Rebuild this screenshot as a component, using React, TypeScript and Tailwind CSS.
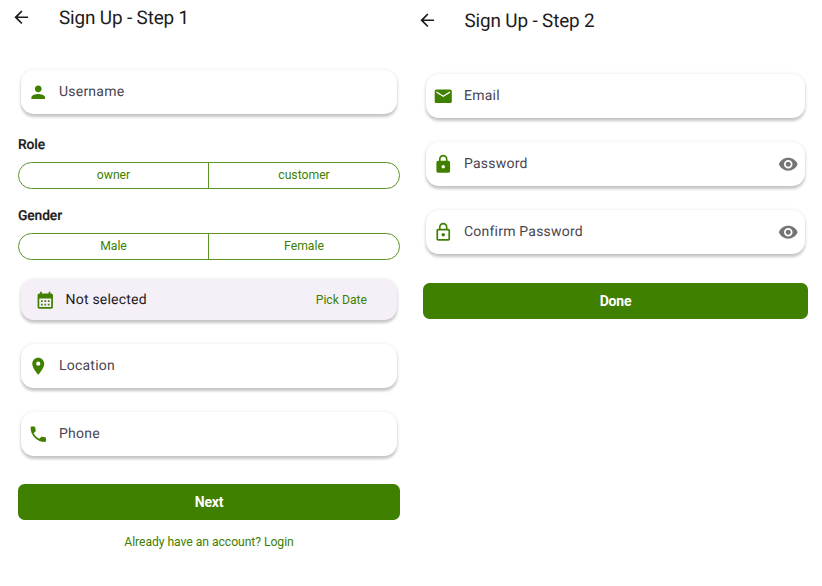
import type { ReactNode } from "react";
import {
  MdArrowBack,
  MdCalendarMonth,
  MdEmail,
  MdLocationOn,
  MdLock,
  MdLockOutline,
  MdPerson,
  MdPhone,
  MdVisibility,
} from "react-icons/md";

const raised =
  "rounded-[13px] shadow-[0_2.5px_3px_rgba(0,0,0,0.2),0_0.5px_4px_rgba(0,0,0,0.07)]";

function Header({ title, className }: { title: string; className: string }) {
  return (
    <header className={`flex items-center ${className}`}>
      <MdArrowBack className="size-[20.5px] shrink-0 text-[#1d1b20]" />
      <h1 className="ml-[27.5px] text-[18.9px] leading-[24px] tracking-[-0.14px] text-[#1d1b20]">
        {title}
      </h1>
    </header>
  );
}

function Field({
  icon,
  label,
  secret = false,
  className = "",
}: {
  icon: ReactNode;
  label: string;
  secret?: boolean;
  className?: string;
}) {
  return (
    <div className={`flex h-[44px] items-center bg-white px-[7px] ${raised} ${className}`}>
      <span className="shrink-0 text-[20.5px] text-[#408000]">{icon}</span>
      <span className="ml-[10.5px] text-[14px] leading-[20px] tracking-[0.22px] text-[#49454f]">
        {label}
      </span>
      {secret && <MdVisibility className="ml-auto size-[20.5px] text-[#757575]" />}
    </div>
  );
}

function Segmented({ options }: { options: [string, string] }) {
  return (
    <div className="grid h-[27px] grid-cols-2 divide-x divide-[#5c9426] overflow-hidden rounded-full border border-[#5c9426] text-[12.2px] text-[#408000]">
      {options.map((option) => (
        <button key={option} className="flex items-center justify-center pt-px">
          {option}
        </button>
      ))}
    </div>
  );
}

function PrimaryButton({ children, className }: { children: ReactNode; className: string }) {
  return (
    <button
      className={`flex w-full items-center justify-center rounded-[6.5px] bg-[#408000] text-[14px] font-bold tracking-[-0.2px] text-white ${className}`}
    >
      {children}
    </button>
  );
}

function GroupLabel({ children }: { children: ReactNode }) {
  return (
    <h2 className="pt-px text-[13.8px] font-medium leading-[20px] tracking-[-0.1px] text-[#1d1b20] [-webkit-text-stroke:0.2px]">
      {children}
    </h2>
  );
}

export default function App() {
  return (
    <main className="flex h-[586px] w-[822px] overflow-hidden bg-white font-[Roboto,sans-serif] [text-rendering:geometricPrecision]">
      <section className="w-[400px] shrink-0 pl-[18px]">
        <Header title="Sign Up - Step 1" className="-ml-[7px] h-[35px]" />
        <Field icon={<MdPerson />} label="Username" className="mx-[3px] mt-[35px]" />
        <div className="mt-[20px]">
          <GroupLabel>Role</GroupLabel>
          <div className="pt-[6.5px]">
            <Segmented options={["owner", "customer"]} />
          </div>
        </div>
        <div className="mt-[16.5px]">
          <GroupLabel>Gender</GroupLabel>
          <div className="pt-[6.5px]">
            <Segmented options={["Male", "Female"]} />
          </div>
        </div>
        <div
          className={`mx-[3px] mt-[19.5px] flex h-[41px] items-center bg-[#f5f0f8] pl-[14px] pr-[30px] pt-px ${raised}`}
        >
          <MdCalendarMonth className="size-[20.5px] text-[#408000]" />
          <span className="ml-[10px] text-[14px] leading-[20px] tracking-[0.22px] text-[#1d1b20]">
            Not selected
          </span>
          <button className="ml-auto text-[12.2px] leading-[20px] text-[#408000]">Pick Date</button>
        </div>
        <Field icon={<MdLocationOn />} label="Location" className="mx-[3px] mt-[24px]" />
        <Field icon={<MdPhone />} label="Phone" className="mx-[3px] mt-[24px]" />
        <PrimaryButton className="mt-[28px] h-[36px]">Next</PrimaryButton>
        <button className="mt-[12px] flex h-[20px] w-full items-center justify-center text-[12.2px] tracking-[-0.06px] text-[#408000]">
          Already have an account? Login
        </button>
      </section>
      <section className="ml-[23px] w-[385px] shrink-0">
        <Header title="Sign Up - Step 2" className="-ml-[6.5px] h-[41px]" />
        <div className="mx-[3px] mt-[33px] flex flex-col gap-[24px]">
          <Field icon={<MdEmail />} label="Email" />
          <Field icon={<MdLock />} label="Password" secret />
          <Field icon={<MdLockOutline />} label="Confirm Password" secret />
        </div>
        <PrimaryButton className="mt-[29px] h-[36px]">Done</PrimaryButton>
      </section>
    </main>
  );
}
